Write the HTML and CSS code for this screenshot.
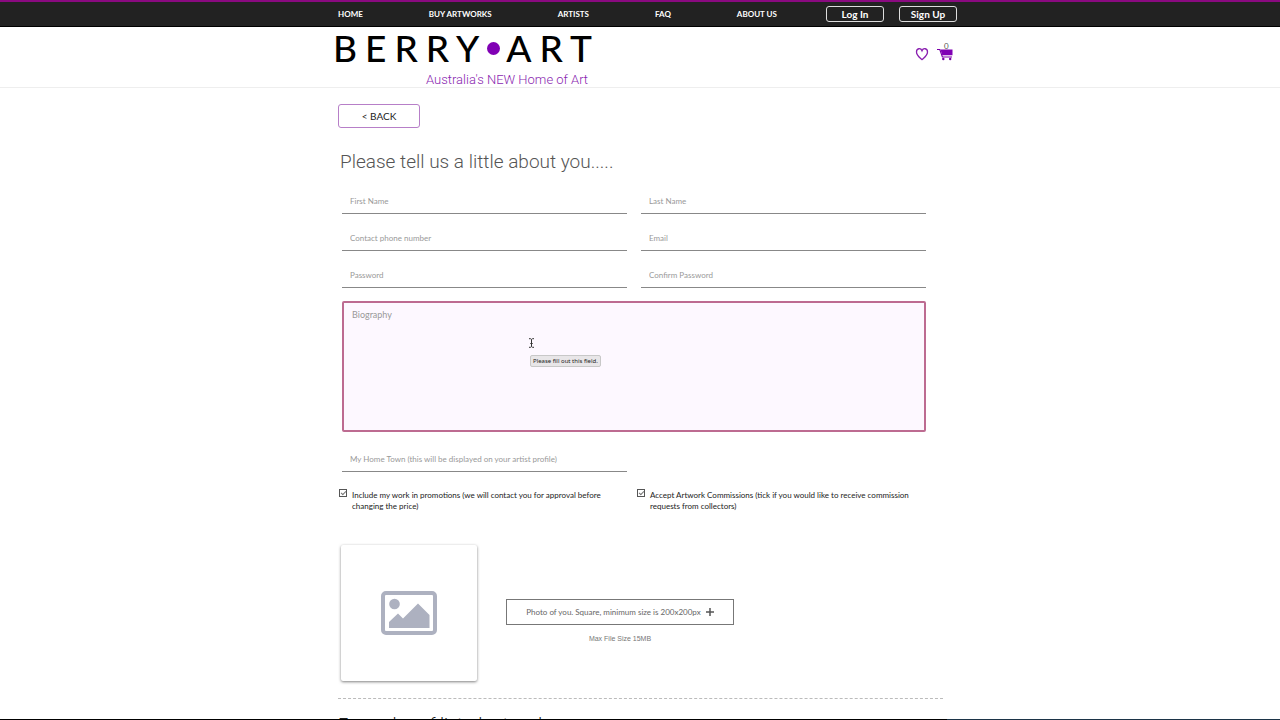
FILE: index.html
```html
<!DOCTYPE html>
<html lang="en">
  <head>
    <title>Berry Art - Artist Sign Up</title>
    <meta charset="utf-8" />
    <meta name="viewport" content="width=device-width, initial-scale=1" />
    <link rel="stylesheet" href="styles.css">
  </head>
  <body>
    <div class="topbar">
      <div class="container topbar-inner">
        <nav class="menu">
          <a href="#">HOME</a>
          <a href="#">BUY ARTWORKS</a>
          <a href="#">ARTISTS</a>
          <a href="#">FAQ</a>
          <a href="#">ABOUT US</a>
        </nav>
        <div class="account">
          <button type="button">Log In</button>
          <button type="button">Sign Up</button>
        </div>
      </div>
    </div>

    <header class="header">
      <div class="container header-inner">
        <a class="brand" href="#">
          <span class="logo">BERRY<span class="dot"></span>ART</span>
          <span class="tagline">Australia's NEW Home of Art</span>
        </a>
        <div class="icons">
          <a href="#" aria-label="Favourites">
            <svg width="14" height="14" viewBox="0 0 14 14">
              <path d="M7 12.6C5.2 10.8 1.5 8.6 1.5 4.9c0-3.700 4.300-4.300 5.500-1.200 1.200-3.100 5.500-2.500 5.500 1.200 0 3.700-3.700 5.900-5.500 7.700z" fill="none" stroke="#8a1fb0" stroke-width="1.300"/>
            </svg>
          </a>
          <a class="cart" href="#" aria-label="Cart">
            <span class="cart-count">0</span>
            <svg width="16" height="14" viewBox="0 0 16 14">
              <path d="M0 2.500h2.800l2.600 7.500h9.600" fill="none" stroke="#7a00a8" stroke-width="1.200"/>
              <path d="M3.500 2.500h12v5.800H5.300z" fill="#8000b4"/>
              <circle cx="6.300" cy="12" r="1.200" fill="#7a00a8"/>
              <circle cx="13.200" cy="12" r="1.200" fill="#7a00a8"/>
            </svg>
          </a>
        </div>
      </div>
    </header>

    <main class="container main">
      <button class="back" type="button">&lt; BACK</button>
      <h1>Please tell us a little about you.....</h1>

      <form>
        <div class="fields">
          <input type="text" placeholder="First Name" aria-label="First Name">
          <input type="text" placeholder="Last Name" aria-label="Last Name">
          <input type="tel" placeholder="Contact phone number" aria-label="Contact phone number">
          <input type="email" placeholder="Email" aria-label="Email">
          <input type="password" placeholder="Password" aria-label="Password">
          <input type="password" placeholder="Confirm Password" aria-label="Confirm Password">
          <div class="bio">
            <textarea placeholder="Biography" aria-label="Biography"></textarea>
            <svg class="cursor" width="7" height="10" viewBox="0 0 7 10">
              <path d="M1 .7h1.500l1 .7 1-.7H6M1 9.300h1.500l1-.7 1 .7H6M3.500 1.400v7.200M2.300 5.500h2.400" fill="none" stroke="#333" stroke-width="1"/>
            </svg>
            <span class="tip">Please fill out this field.</span>
          </div>
          <input type="text" placeholder="My Home Town (this will be displayed on your artist profile)" aria-label="My Home Town">
        </div>

        <div class="checks">
          <div class="check">
            <input type="checkbox" id="promo" checked>
            <label for="promo">Include my work in promotions (we will contact you for approval before changing the price)</label>
          </div>
          <div class="check">
            <input type="checkbox" id="commission" checked>
            <label for="commission">Accept Artwork Commissions (tick if you would like to receive commission requests from collectors)</label>
          </div>
        </div>

        <div class="photo">
          <div class="preview">
            <svg width="56" height="44" viewBox="0 0 56 44">
              <rect x="2" y="2" width="52" height="40" rx="3" fill="none" stroke="#adb1c0" stroke-width="4"/>
              <circle cx="13.500" cy="13" r="5.300" fill="#adb1c0"/>
              <path d="M8 37v-6l9-8.500 5 5L37 12.500l11.500 11.500v13z" fill="#adb1c0"/>
            </svg>
          </div>
          <div class="upload">
            <button type="button">
              Photo of you. Square, minimum size is 200x200px
              <svg width="8" height="8" viewBox="0 0 8 8"><path d="M4 0v8M0 4h8" stroke="#555" stroke-width="1.500"/></svg>
            </button>
            <p>Max File Size 15MB</p>
          </div>
        </div>
      </form>

      <h2>Examples of listed artworks</h2>
    </main>
    <div class="progress"><div></div></div>
  </body>
</html>
```

FILE: styles.css
```css
* {
  box-sizing: border-box;
}

html {
  scrollbar-width: none;
}

body {
  margin: 0;
  font-family: Lato, "Liberation Sans", sans-serif;
  font-size: 8px;
  color: #222;
  background: #fff;
}

a {
  color: inherit;
  text-decoration: none;
}

button {
  font-family: inherit;
  background: none;
  cursor: pointer;
}

.container {
  max-width: 640px;
  margin: 0 auto;
}

/* top bar */
.topbar {
  height: 27px;
  border-top: 2px solid #8a0a80;
  border-bottom: 1px solid #000;
  background: #222;
  color: #fff;
}

.topbar-inner {
  display: flex;
  justify-content: space-between;
  align-items: center;
  height: 24px;
  padding: 0 3px 0 18px;
}

.menu {
  display: flex;
  gap: 66px;
  font-weight: bold;
}

.account {
  display: flex;
  gap: 15px;
}

.account button {
  width: 58px;
  height: 16px;
  padding: 0;
  border: 1px solid #ddd;
  border-radius: 3px;
  color: #fff;
  font-size: 10px;
  font-weight: bold;
  line-height: 14px;
}

/* logo */
.header {
  border-bottom: 1px solid #eee;
}

.header-inner {
  display: flex;
  justify-content: space-between;
  height: 60px;
  padding: 0 7px 0 13px;
}

.brand {
  display: flex;
  flex-direction: column;
}

.logo {
  display: flex;
  align-items: center;
  height: 44px;
  padding-bottom: 2px;
  color: #000;
  font-size: 37px;
  font-weight: 500;
  line-height: 42px;
  letter-spacing: 8px;
}

.dot {
  width: 13px;
  height: 13px;
  margin-right: 6px;
  border-radius: 50%;
  background: #8000b4;
}

.tagline {
  padding-left: 93px;
  color: #8a1fb0;
  font-family: Roboto, sans-serif;
  font-size: 13px;
  font-weight: 300;
  line-height: 18px;
}

.icons {
  display: flex;
  gap: 8px;
  padding-top: 20px;
}

.cart {
  position: relative;
}

.cart-count {
  position: absolute;
  top: -5px;
  left: 7px;
  color: #555;
  font-size: 8px;
  line-height: 8px;
}

/* form */
.main {
  padding: 16px 17px 0 18px;
}

.back {
  display: block;
  width: 82px;
  height: 24px;
  border: 1px solid #b77fc8;
  border-radius: 3px;
  color: #222;
  font-size: 10px;
}

h1,
h2 {
  margin: 0;
  font-family: Roboto, sans-serif;
  font-size: 19px;
  font-weight: 300;
  line-height: 24px;
}

h1 {
  margin: 22px 2px 14px;
  color: #555;
}

.fields {
  display: grid;
  grid-template-columns: 1fr 1fr;
  gap: 11px 14px;
  padding: 0 17px 0 4px;
}

.fields input {
  height: 26px;
  padding: 0 8px;
  border: 0;
  border-bottom: 1px solid #888;
  background: none;
  font-family: inherit;
  font-size: 8px;
}

.fields input::placeholder,
.bio textarea::placeholder {
  color: #999;
}

.bio {
  position: relative;
  grid-column: 1 / -1;
  margin: 2px 0 3px;
}

.bio textarea {
  display: block;
  width: 100%;
  height: 131px;
  padding: 6px 8px;
  border: 2px solid #bd6b91;
  border-radius: 2px;
  background: #fdf8ff;
  font-family: inherit;
  font-size: 9px;
  resize: none;
}

.cursor {
  position: absolute;
  top: 37px;
  left: 186px;
}

.tip {
  position: absolute;
  top: 54px;
  left: 188px;
  padding: 0 2px;
  border: 1px solid #c8c8c8;
  border-radius: 2px;
  background: #e8e6e8;
  font-family: "Noto Sans", sans-serif;
  font-size: 6px;
  line-height: 10px;
}

.checks {
  display: grid;
  grid-template-columns: 1fr 1fr;
  gap: 9px;
  margin: 17px 17px 0 1px;
}

.check {
  display: flex;
  gap: 5px;
  padding-right: 12px;
  line-height: 11px;
}

.check input {
  flex: none;
  width: 8px;
  height: 8px;
  margin: 0;
  border: 1px solid #555;
  appearance: none;
}

.check input:checked::before {
  content: "";
  display: block;
  width: 4px;
  height: 2px;
  margin: 1px;
  border: solid #777;
  border-width: 0 0 1px 1px;
  transform: rotate(-45deg);
}

.check label {
  padding-top: 1px;
}

.photo {
  display: flex;
  align-items: center;
  gap: 29px;
  margin: 33px 3px 0;
}

.preview {
  display: flex;
  align-items: center;
  justify-content: center;
  width: 136px;
  height: 136px;
  border-radius: 2px;
  box-shadow: 0 1px 3px rgba(0, 0, 0, 0.5);
}

.upload {
  padding-top: 16px;
  color: #666;
  text-align: center;
}

.upload button {
  width: 228px;
  height: 26px;
  padding: 0;
  border: 1px solid #777;
  color: #666;
  font-size: 8px;
}

.upload svg {
  margin-left: 3px;
  vertical-align: -1px;
}

.upload p {
  margin: 9px 0 0;
  color: #777;
  font-family: "Liberation Sans", sans-serif;
  font-size: 7px;
  line-height: 10px;
}

h2 {
  margin: 17px 0 0;
  padding-top: 14px;
  border-top: 1px dashed #bbb;
  font-size: 18px;
}

.progress {
  position: fixed;
  right: 0;
  bottom: 0;
  left: 0;
  height: 1px;
  background: #1c3448;
}

.progress div {
  width: 74%;
  height: 1px;
  background: #000;
}
```
